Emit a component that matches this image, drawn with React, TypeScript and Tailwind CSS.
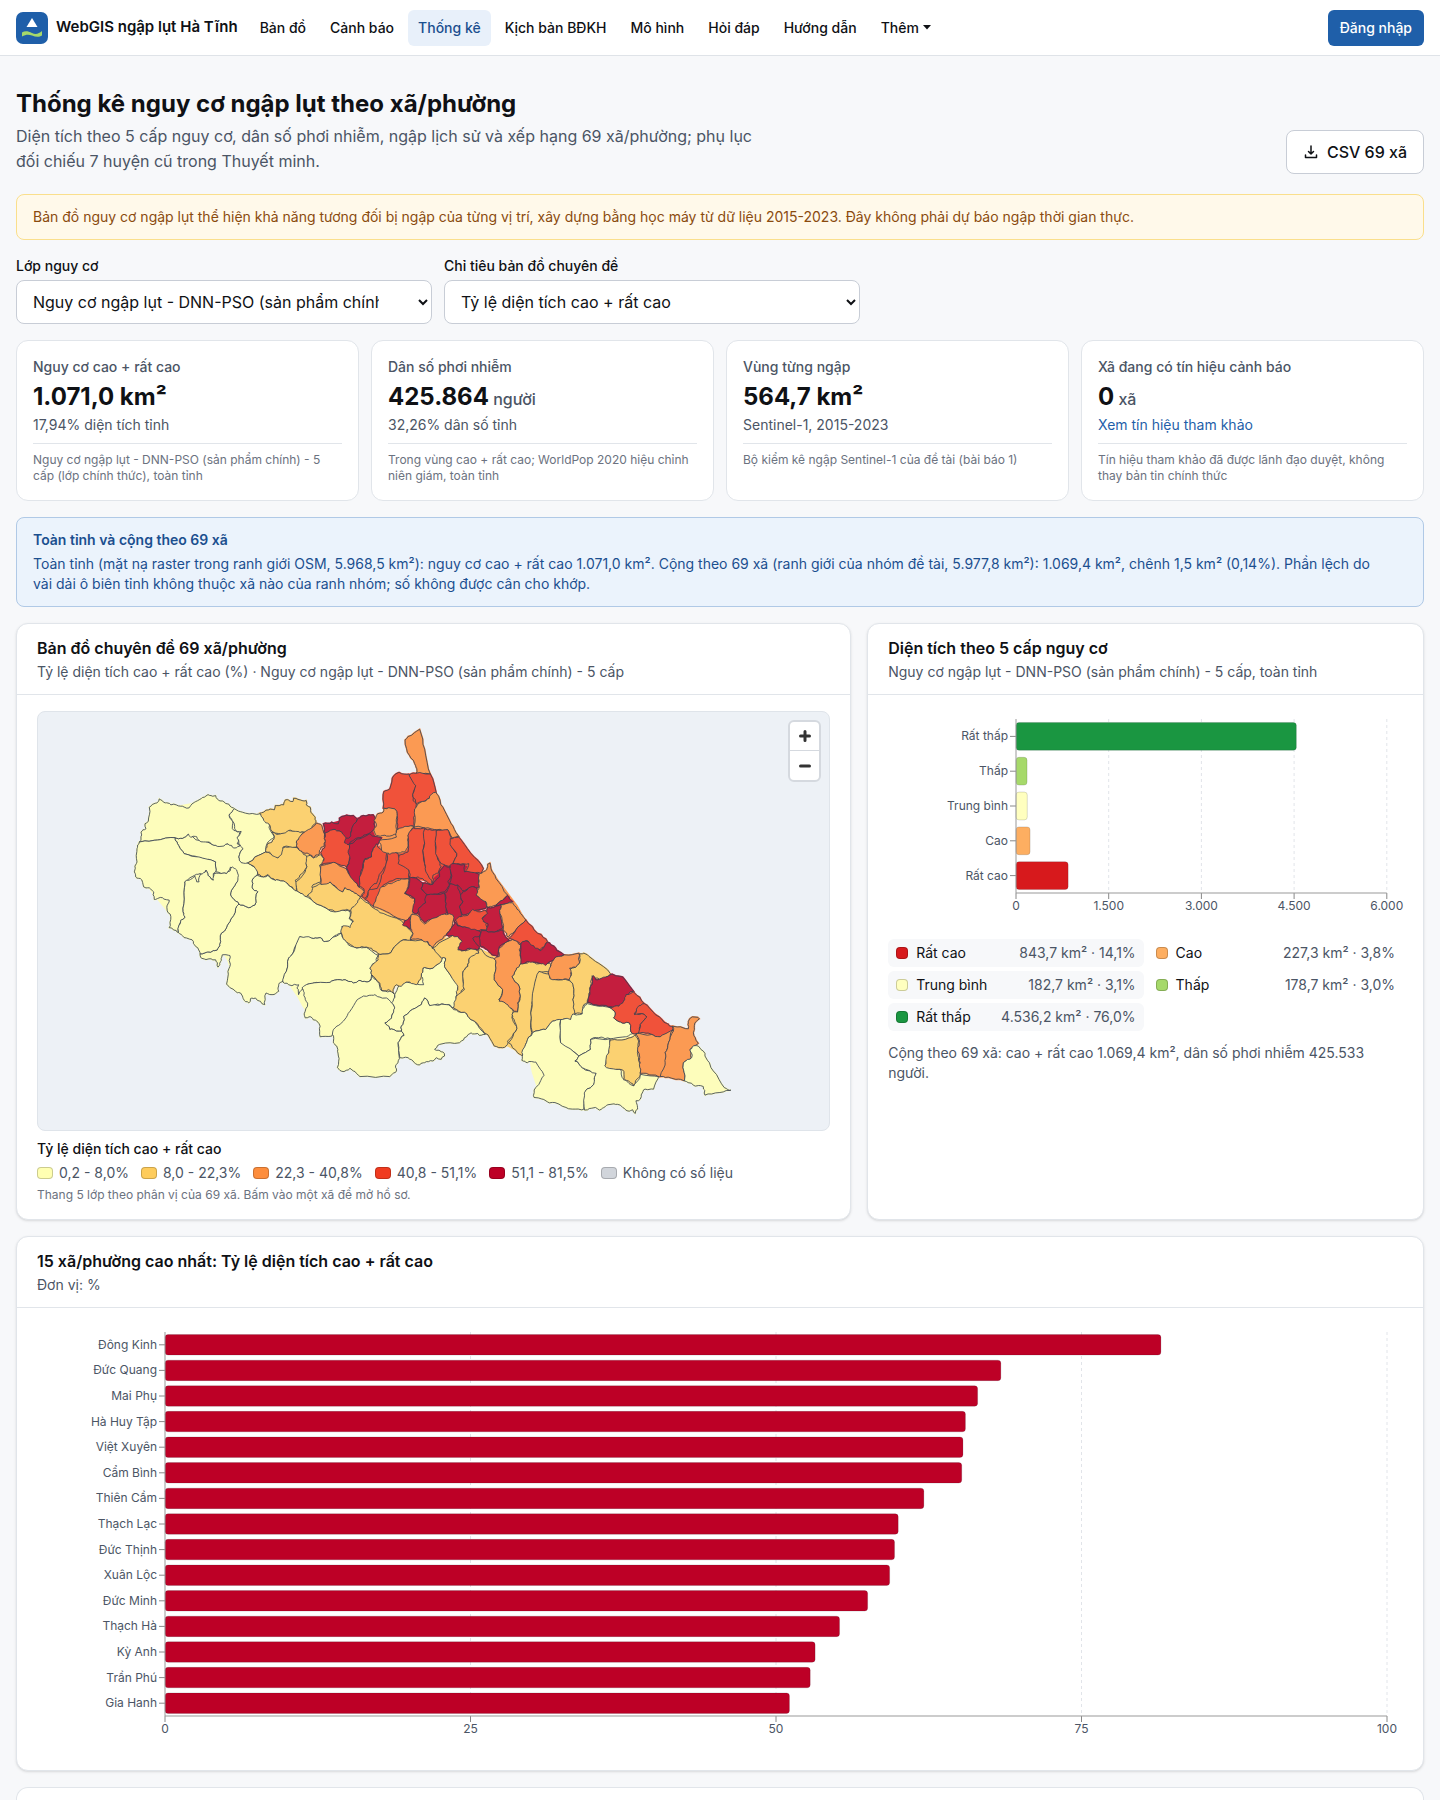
import { ReactNode } from "react";

const COLORS = {
    y: "#fdfdbb",
    g: "#fbd171",
    o: "#fb9a53",
    r: "#f0523a",
    c: "#c41e3e",
};

type Shape = [keyof typeof COLORS, string];

// Each sheet keeps its own origin, the polygons are drawn back to front.
// "base" holds coarse fills that lie under the wards of one colour.
const SHEETS: { x: number; y: number; base: Shape[]; shapes: Shape[] }[] = [
    {
        x: 249, y: 12,
        base: [
            ["y", "70,375 95,285 260,250 340,300 420,310 455,370 400,440 560,555 690,600 660,660 540,665 480,800 340,800 310,720 180,640 70,500"],
            ["g", "400,445 490,400 455,350 440,310 560,270 580,340 600,430 600,510 690,540 690,580 620,575 530,520 430,480"],
            ["c", "615,330 700,305 762,318 780,367 718,510 684,458 625,350"],
            ["r", "795,280 840,180 930,180 940,230 885,265 880,332 835,340"],
            ["o", "605,450 640,445 700,515 720,540 670,525"],
        ],
        shapes: [
            ["y", "355,567 385,578 403,570 412,530 395,518 395,495 410,480 430,485 443,480 465,495 490,497 505,510 530,527 555,543 575,555 610,575 640,590 668,585 690,590 688,610 700,622 690,640 665,635 663,655 650,660 632,673 612,680 600,668 575,670 540,665 532,685 515,720 505,730 498,770 488,800 475,810 475,830 455,840 437,835 433,870 420,860 405,850 390,852 385,865 372,858 360,835 345,830 325,815 318,808 322,770 328,755 328,722 305,720 300,740 292,757 285,735 265,732 240,728 238,717 270,712 290,705 300,680 302,655 328,620 345,585"],
            ["y", "163,367 190,366 203,356 235,375 285,390 358,385 368,400 355,425 362,440 380,443 408,460 410,480 395,495 395,518 412,530 403,570 385,578 355,567 333,545 333,525 350,500 348,480 330,455 318,475 285,470 285,440 265,432 235,428 190,415 170,385"],
            ["y", "55,380 60,350 75,340 72,325 82,318 85,275 108,262 115,250 128,260 150,268 180,272 205,277 225,258 245,246 262,237 285,240 298,256 325,266 342,280 335,292 326,297 336,318 340,345 352,350 362,345 355,365 350,385 358,392 340,398 322,385 310,392 285,390 265,380 235,375 228,364 210,366 203,356 190,366 163,367 110,374"],
            ["y", "342,280 375,293 418,295 430,312 446,325 450,345 462,365 448,375 438,390 436,410 410,422 383,442 362,442 355,425 368,400 355,385 350,365 362,348 345,345 335,315 326,300"],
            ["y", "55,380 110,374 163,367 170,385 190,415 235,425 285,440 285,470 278,475 278,495 262,480 256,465 245,478 238,475 222,480 192,500 190,540 187,590 193,608 180,620 173,653 158,645 145,638 150,605 138,577 145,555 125,548 100,553 98,530 85,518 68,515 58,490 44,485 40,470 48,440 48,400"],
            ["y", "192,500 205,495 222,482 228,500 235,500 238,478 256,465 262,480 278,495 280,475 300,475 318,475 335,455 350,470 350,500 333,525 333,545 355,567 345,585 328,620 302,655 300,680 290,705 270,712 238,717 225,695 218,680 190,668 173,653 180,615 193,607 187,590 190,540"],
            ["g", "562,540 575,528 570,520 600,505 625,500 645,515 668,530 675,517 700,530 722,545 712,565 695,592 680,583 670,585 645,590 610,575 575,555"],
            ["g", "530,527 522,505 555,470 560,455 555,425 570,420 580,428 600,418 612,430 610,445 598,450 602,500 575,515 575,530 560,545"],
            ["g", "383,442 410,422 436,410 450,415 473,428 485,400 495,395 530,397 545,410 560,425 560,455 545,475 525,495 528,528 505,508 490,497 465,495 443,478 430,485 412,478 405,460"],
            ["g", "455,350 480,355 500,345 555,350 540,365 528,380 530,395 488,395 485,410 473,428 452,415 437,410 440,390 455,380 462,365"],
            ["g", "418,293 445,283 462,283 465,270 490,268 495,253 518,258 520,248 545,255 558,255 558,268 570,275 572,290 585,305 587,323 575,340 552,350 530,348 505,345 480,355 455,348 445,325 430,315"],
            ["o", "528,380 540,362 565,342 580,333 590,323 605,330 615,370 612,392 598,405 598,415 580,427 565,415 545,408 530,395"],
            ["o", "602,450 640,440 678,460 690,480 715,515 733,530 722,545 700,530 675,517 668,530 645,512 630,500 602,508"],
            ["c", "610,325 635,320 655,325 658,308 685,300 700,300 712,312 705,330 695,345 690,370 675,385 665,350 645,342 620,352 615,375 612,350"],
            ["r", "615,352 645,342 665,350 680,370 683,385 690,400 688,430 680,455 645,442 625,443 605,448 612,430 602,412 615,392 612,370"],
            ["c", "712,312 730,300 760,298 768,312 762,325 770,340 745,355 720,367 700,375 685,388 673,382 678,368 690,365 695,345"],
            ["c", "690,385 720,370 750,355 785,367 775,385 760,400 755,425 735,430 728,460 720,485 718,515 700,495 680,458 690,430 685,405"],
            ["r", "770,385 780,400 802,412 800,440 785,470 770,505 750,520 735,550 725,545 733,528 718,512 722,480 735,432 755,425 760,400"],
            ["r", "815,410 835,415 840,430 870,455 868,490 830,490 790,510 775,545 762,575 735,553 750,522 772,520 785,480 800,440 805,415"],
            ["r", "790,278 792,228 810,220 822,180 838,170 868,175 888,210 880,235 880,255 890,265 885,300 885,333 855,338 832,342 832,300 825,280"],
            ["o", "770,300 790,290 792,278 825,280 832,300 830,342 830,357 800,362 770,360 762,345 770,330 762,315"],
            ["o", "900,40 915,100 932,175 890,173 888,150 870,120 856,72 865,62"],
            ["r", "868,178 888,173 932,175 950,232 935,240 910,258 890,265 880,245 888,210"],
        ],
    },
    {
        x: 249, y: 507,
        base: [
            ["y", "500,300 540,175 660,170 775,230 755,300 820,345 830,450 640,460 560,400"],
            ["g", "690,130 720,60 870,125 870,180 780,220 670,170"],
        ],
        shapes: [
            ["y", "538,170 575,175 600,173 612,185 632,178 663,160 670,175 685,195 710,205 740,203 775,227 770,245 750,265 755,285 748,305 720,302 700,310 685,305 660,300 630,308 590,308 568,312 545,330 535,345 530,325 535,315 515,318 488,307 498,275 505,235 515,225"],
            ["y", "545,325 568,312 630,308 660,300 685,305 700,310 720,302 748,305 757,285 772,305 782,330 810,335 825,345 822,375 830,400 815,430 780,440 690,450 637,465 635,470 600,472 600,440 590,425 572,412 555,415 555,395 562,380 555,355 550,335"],
            ["g", "722,53 755,80 790,100 845,122 880,160 872,182 850,180 830,195 805,222 775,222 755,205 725,200 710,203 685,190 670,178 663,150 668,138 690,143 700,125 688,115 692,90 710,70"],
        ],
    },
    {
        x: 1209, y: 507,
        base: [
            ["y", "-300,480 -200,360 -130,340 0,240 45,380 100,450 -20,495 -120,530 -150,580 -240,580 -290,560"],
            ["g", "-110,185 50,170 120,205 240,270 330,260 425,225 500,290 440,370 400,415 280,455 250,520 190,495 75,395 0,245 -170,310 -180,235"],
            ["o", "170,240 235,190 245,240 220,290 240,380 180,365"],
            ["y", "260,500 320,445 445,375 530,385 590,470 650,595 590,655 440,685 300,655"],
            ["r", "520,385 585,345 690,435 690,460 600,460 530,415"],
            ["o", "600,465 760,450 775,490 735,600 610,580"],
        ],
        shapes: [
            ["y", "-135,345 -120,315 -98,307 -80,310 -48,315 -55,290 -50,265 -20,265 0,250 5,235 18,235 15,260 35,290 55,315 55,335 50,350 50,370 42,385 20,375 0,375 -30,378 -45,355 -55,375 -90,395 -108,410 -115,440 -115,455 -130,455 -150,450 -165,430 -145,415 -137,385 -145,370"],
            ["y", "-323,465 -315,445 -290,425 -270,395 -248,360 -220,350 -195,345 -160,355 -145,370 -135,385 -145,415 -165,430 -150,450 -130,455 -115,455 -107,468 -125,490 -122,530 -130,555 -130,575 -150,592 -240,592 -260,575 -270,567 -288,577 -308,565 -305,530 -310,500 -320,490"],
            ["y", "-115,440 -108,410 -90,395 -55,375 -45,355 -30,378 20,375 42,390 75,398 85,410 105,425 138,465 120,468 115,462 95,460 75,475 60,490 0,495 -15,510 10,518 15,530 5,540 -10,535 -20,545 -40,547 -60,557 -80,545 -95,535 -120,535 -125,490 -107,468 -115,455"],
            ["g", "-110,180 -40,183 -20,205 8,235 0,250 -20,265 -50,265 -55,290 -70,315 -100,307 -115,320 -130,315 -140,330 -138,342 -155,330 -175,332 -180,310 -205,285 -210,265 -185,240 -185,222 -155,222 -130,195"],
            ["g", "-22,205 20,178 50,163 70,185 55,210 75,212 100,205 118,215 115,225 90,235 85,260 70,280 75,325 60,345 50,350 55,320 35,290 15,260 18,235 5,235 0,228"],
            ["g", "118,205 150,232 165,238 170,265 165,300 190,330 178,360 205,375 222,395 220,420 232,440 230,455 205,485 200,500 190,505 165,500 135,460 105,425 85,410 75,398 42,385 50,350 75,330 70,280 85,260 90,235 118,220"],
            ["g", "235,397 243,350 240,320 218,290 232,265 245,252 270,245 300,252 332,250 332,278 300,275 290,320 278,370 275,400 278,460 262,490 250,530 235,520 208,490 230,455 232,440 220,415 222,398"],
            ["o", "210,183 232,180 245,195 240,210 247,240 232,265 218,290 240,320 243,350 235,370 235,397 225,395 205,375 180,365 190,330 165,300 170,265 165,238 180,230 178,205"],
            ["g", "300,275 330,282 332,295 370,300 392,303 403,320 402,360 408,405 395,420 370,420 340,425 320,450 280,460 275,400 285,320"],
            ["g", "422,222 435,220 470,245 515,282 495,298 470,295 460,288 455,320 450,350 445,370 435,375 430,403 408,403 402,360 403,320 390,298 398,280 390,268 410,262 422,250"],
            ["o", "345,235 375,225 420,220 422,250 410,262 392,265 395,280 390,300 370,300 333,297 330,270 340,245"],
            ["y", "445,372 510,383 530,400 525,415 545,427 572,430 582,462 560,472 515,478 487,473 455,480 455,510 420,530 365,495 365,420 395,420 402,403 430,403 437,378"],
            ["y", "280,460 320,450 340,425 365,420 365,490 420,530 408,545 430,565 472,580 465,615 440,635 435,690 400,690 360,675 325,668 285,655 290,625 315,588 290,548 265,550 248,543 248,520 262,490"],
            ["y", "455,510 455,480 515,478 515,500 500,560 545,570 555,600 585,620 605,585 660,592 645,630 615,632 605,660 592,665 597,690 590,703 582,692 565,695 545,678 520,675 500,682 482,693 470,685 437,693 437,650 440,635 465,615 472,582 430,565 408,545 420,530"],
            ["c", "463,287 470,300 500,292 520,283 552,292 585,335 570,342 555,365 540,380 510,382 470,375 447,368 455,320"],
            ["r", "585,337 617,372 600,385 587,402 610,402 625,412 605,435 600,460 582,462 572,430 545,427 525,415 530,400 510,383 540,380 558,360 562,345"],
            ["r", "617,372 650,405 685,432 702,440 700,455 665,472 640,465 600,462 605,435 625,412 610,402 587,405 597,383"],
            ["g", "515,482 560,480 590,465 600,485 598,530 605,560 605,585 595,600 585,620 570,605 555,602 552,572 530,570 498,560 510,520"],
            ["o", "592,462 640,465 665,472 703,452 690,490 680,520 682,550 672,590 640,587 605,582 605,550 597,515 602,490"],
            ["o", "703,440 750,448 750,430 762,412 783,418 768,438 765,460 780,492 755,510 758,535 735,550 738,605 700,597 665,592 680,550 680,520 690,490 705,455"],
            ["y", "762,502 780,500 800,522 800,530 825,575 858,625 878,633 845,640 800,648 795,622 765,618 738,605 735,550 760,535 755,510"],
        ],
    },
    {
        x: 879, y: 27,
        base: [
            ["r", "205,398 235,325 320,328 388,352 455,455 370,440 308,490 240,475 130,555 97,535 100,440 148,375"],
            ["o", "140,350 200,325 320,220 380,350 240,330 225,395 155,395"],
            ["o", "240,478 260,600 370,590 350,650 308,680 245,655 220,598 130,560 150,505"],
            ["c", "238,472 300,490 345,437 405,435 450,462 445,528 468,565 400,585 375,605 285,608 250,575 255,535"],
            ["c", "352,645 378,605 415,625 455,632 470,572 500,558 515,555 520,630 538,660 505,705 450,680 400,690"],
            ["o", "455,465 480,435 590,600 537,650 515,590 515,556 475,560"],
            ["r", "385,605 430,572 470,575 472,630 415,622"],
            ["c", "580,680 640,690 660,670 700,705 650,732 580,728"],
        ],
        shapes: [
            ["o", "318,215 340,260 365,310 388,348 368,352 355,328 320,328 295,322 253,320 255,265 265,250 290,240 305,222"],
            ["o", "148,360 200,350 200,330 235,318 255,320 235,345 235,375 225,395 205,398 180,402 155,390"],
            ["r", "235,345 250,322 285,322 288,345 282,380 285,430 292,455 310,475 308,493 290,483 265,470 240,475 238,450 205,430 208,405 235,395"],
            ["r", "285,325 320,328 320,395 330,425 335,440 328,458 310,465 310,490 292,460 285,430 283,380"],
            ["r", "320,330 355,328 365,355 365,375 382,400 370,430 358,438 335,430 318,400"],
            ["r", "362,355 388,350 425,400 462,445 455,460 430,458 405,458 418,430 385,430 370,430 382,400 365,378"],
            ["o", "238,478 235,500 225,520 240,530 255,535 252,570 250,580 240,590 235,603 215,598 170,575 130,560 140,530 150,505 175,490 210,480"],
            ["c", "238,470 265,478 280,490 275,505 290,520 288,545 270,570 262,582 248,575 255,535 238,525 225,520 238,495"],
            ["c", "280,490 310,492 330,470 328,455 345,435 362,440 365,465 355,485 360,495 345,515 320,522 290,522 275,505"],
            ["c", "362,435 375,430 405,433 405,455 450,462 450,500 430,500 400,512 385,495 360,490 365,460"],
            ["c", "290,525 345,518 350,550 352,578 340,588 310,595 285,608 270,590 265,570 288,548"],
            ["c", "400,515 425,500 438,502 445,528 470,548 468,565 430,575 400,585 390,560 400,545 390,530"],
            ["c", "360,492 385,495 385,505 400,545 390,560 395,590 375,605 355,585 350,550 345,520"],
            ["o", "482,428 485,445 500,475 535,525 515,545 500,555 475,562 470,545 440,525 450,500 450,460 468,452 475,432"],
            ["c", "535,527 550,545 515,555 500,556 520,540"],
            ["c", "475,562 500,558 515,553 512,580 520,625 500,635 470,632 475,610 458,600 470,580"],
            ["o", "515,553 550,548 570,572 590,600 560,630 537,652 522,630 512,580"],
            ["c", "243,590 243,628 218,615 225,603"],
            ["o", "245,583 262,585 285,612 310,595 345,582 370,585 372,600 365,625 350,645 325,665 308,685 295,665 270,658 242,660 250,640 243,625"],
            ["r", "378,600 395,590 420,580 430,568 445,575 470,572 475,580 458,595 470,610 472,630 440,632 410,622 385,615"],
            ["c", "375,605 385,618 410,622 445,632 455,640 450,650 430,655 450,680 445,690 420,685 400,692 385,685 398,665 385,650 350,645 368,620"],
            ["c", "455,632 470,632 500,635 520,630 528,650 540,662 510,680 505,710 485,700 475,690 455,680 450,655"],
            ["c", "655,667 680,685 705,705 675,718 650,737 630,730 595,725 575,732 575,672 590,662 633,693"],
            ["r", "590,600 625,640 655,665 633,690 605,675 590,662 575,672 540,655 560,630"],
        ],
    },
];

// Splits every edge and nudges its middle. The nudge depends only on the edge's
// own ends, so two neighbours that share an edge stay joined.
function roughen(text: string, ox: number, oy: number) {
    let pts = text.split(" ").map((p) => p.split(",").map(Number)).map(([x, y]) => [x + ox, y + oy]);
    for (let pass = 0; pass < 2; pass++) {
        const next: number[][] = [];
        pts.forEach((a, i) => {
            const b = pts[(i + 1) % pts.length];
            const len = Math.hypot(b[0] - a[0], b[1] - a[1]);
            next.push(a);
            if (len < 9) return;
            const mx = (a[0] + b[0]) / 2;
            const my = (a[1] + b[1]) / 2;
            const amp = Math.min(len * 0.15, 2.5);
            next.push([mx + Math.sin(mx * 12.9 + my * 7.2) * amp, my + Math.sin(mx * 5.3 + my * 17.7) * amp]);
        });
        pts = next;
    }
    return pts.map(([x, y]) => `${x.toFixed(1)},${y.toFixed(1)}`).join(" ");
}

const toRegions = (key: "base" | "shapes") =>
    SHEETS.flatMap((s) => s[key].map(([color, pts]) => ({ fill: COLORS[color], points: roughen(pts, s.x, s.y) })));

const BASES = toRegions("base");
const REGIONS = toRegions("shapes");

const NAV = ["Bản đồ", "Cảnh báo", "Thống kê", "Kịch bản BĐKH", "Mô hình", "Hỏi đáp", "Hướng dẫn"];

const STATS = [
    { label: "Nguy cơ cao + rất cao", value: "1.071,0 km²", unit: "", sub: "17,94% diện tích tỉnh", note: "Nguy cơ ngập lụt - DNN-PSO (sản phẩm chính) - 5 cấp (lớp chính thức), toàn tỉnh" },
    { label: "Dân số phơi nhiễm", value: "425.864", unit: "người", sub: "32,26% dân số tỉnh", note: "Trong vùng cao + rất cao; WorldPop 2020 hiệu chỉnh niên giám, toàn tỉnh" },
    { label: "Vùng từng ngập", value: "564,7 km²", unit: "", sub: "Sentinel-1, 2015-2023", note: "Bộ kiểm kê ngập Sentinel-1 của đề tài (bài báo 1)" },
    { label: "Xã đang có tín hiệu cảnh báo", value: "0", unit: "xã", sub: "Xem tín hiệu tham khảo", link: true, note: "Tín hiệu tham khảo đã được lãnh đạo duyệt, không thay bản tin chính thức" },
];

const MAP_LEGEND = [
    { color: "#ffffb2", label: "0,2 - 8,0%" },
    { color: "#fecc5c", label: "8,0 - 22,3%" },
    { color: "#fd8d3c", label: "22,3 - 40,8%" },
    { color: "#f03b20", label: "40,8 - 51,1%" },
    { color: "#bd0026", label: "51,1 - 81,5%" },
    { color: "#d1d5db", label: "Không có số liệu" },
];

const LEVELS = [
    { name: "Rất cao", value: 843.7, text: "843,7 km² · 14,1%", color: "#d7191c" },
    { name: "Cao", value: 227.3, text: "227,3 km² · 3,8%", color: "#fdae61" },
    { name: "Trung bình", value: 182.7, text: "182,7 km² · 3,1%", color: "#ffffbf" },
    { name: "Thấp", value: 178.7, text: "178,7 km² · 3,0%", color: "#a6d96a" },
    { name: "Rất thấp", value: 4536.2, text: "4.536,2 km² · 76,0%", color: "#1a9641" },
];

const TOP = [
    { name: "Đông Kinh", value: 81.5 },
    { name: "Đức Quang", value: 68.4 },
    { name: "Mai Phụ", value: 66.5 },
    { name: "Hà Huy Tập", value: 65.5 },
    { name: "Việt Xuyên", value: 65.3 },
    { name: "Cẩm Bình", value: 65.2 },
    { name: "Thiên Cầm", value: 62.1 },
    { name: "Thạch Lạc", value: 60.0 },
    { name: "Đức Thịnh", value: 59.7 },
    { name: "Xuân Lộc", value: 59.3 },
    { name: "Đức Minh", value: 57.5 },
    { name: "Thạch Hà", value: 55.2 },
    { name: "Kỳ Anh", value: 53.2 },
    { name: "Trần Phú", value: 52.8 },
    { name: "Gia Hanh", value: 51.1 },
].map((d) => ({ ...d, color: "#bd0026" }));

type BarChartProps = {
    data: { name: string; value: number; color: string }[];
    max: number;
    ticks: string[];
    height: number;
    label: string;
};

function BarChart({ data, max, ticks, height, label }: BarChartProps) {
    const band = height / data.length;
    const bar = band * 0.8;

    return (
        <div className="pt-2 pr-4 pb-[38px] pl-32">
            <svg role="img" aria-label={label} width="100%" height={height} className="block overflow-visible text-xs">
                {ticks.map((t, i) => {
                    const x = `${(i / (ticks.length - 1)) * 100}%`;
                    return (
                        <g key={t}>
                            {i > 0 && <line x1={x} x2={x} y1={0} y2={height} stroke="#e1e4e9" strokeDasharray="3 3" />}
                            <line x1={x} x2={x} y1={height} y2={height + 6} stroke="#888" />
                            <text x={x} y={height + 17} textAnchor="middle" fill="#4b5565">{t}</text>
                        </g>
                    );
                })}
                {data.map((d, i) => (
                    <g key={d.name}>
                        <rect
                            x={0}
                            y={i * band + (band - bar) / 2}
                            width={`${(d.value / max) * 100}%`}
                            height={bar}
                            rx={3}
                            fill={d.color}
                            stroke="#111827"
                            strokeOpacity={0.15}
                        />
                        <line x1={-6} x2={0} y1={(i + 0.5) * band} y2={(i + 0.5) * band} stroke="#888" />
                        <text x={-8} y={(i + 0.5) * band + 4} textAnchor="end" fill="#4b5565">{d.name}</text>
                    </g>
                ))}
                <line x1={0} x2={0} y1={0} y2={height} stroke="#999" />
                <line x1={0} x2="100%" y1={height} y2={height} stroke="#999" />
            </svg>
        </div>
    );
}

function Panel({ title, subtitle, children }: { title: string; subtitle: string; children: ReactNode }) {
    return (
        <section className="rounded-xl border border-[#e1e5ea] bg-white shadow-sm">
            <div className="border-b border-[#e1e5ea] px-5 py-3">
                <h2 className="text-base leading-6 font-semibold">{title}</h2>
                <p className="mt-0.5 text-sm text-[#4b5565]">{subtitle}</p>
            </div>
            <div className="px-5 py-4">{children}</div>
        </section>
    );
}

function Swatch({ color }: { color: string }) {
    return <span className="h-3 w-4 shrink-0 rounded-[4px] border border-black/20" style={{ backgroundColor: color }} />;
}

function RiskMap() {
    return (
        <div className="relative h-[420px] overflow-hidden rounded-lg border border-[#dfe4ea] bg-[#edf1f6]">
            <svg role="img" aria-label="Bản đồ 69 xã/phường" viewBox="0 0 2382 1260" className="h-full w-full">
                {BASES.map((r, i) => <polygon key={`b${i}`} points={r.points} fill={r.fill} />)}
                {REGIONS.map((r, i) => <polygon key={`u${i}`} points={r.points} fill={r.fill} stroke={r.fill} strokeWidth="5" />)}
                {REGIONS.map((r, i) => <polygon key={i} points={r.points} fill={r.fill} stroke="#374151" strokeWidth="2.5" strokeLinejoin="round" />)}
            </svg>
            <div className="absolute top-2 right-2 flex w-[33px] flex-col overflow-hidden rounded-md border-2 border-[#d5d9df] bg-white">
                <button type="button" aria-label="Phóng to" className="flex h-[29px] items-center justify-center border-b border-[#d5d9df]">
                    <svg width="12" height="12" viewBox="0 0 12 12" stroke="#333" strokeWidth="3" strokeLinecap="round"><path d="M6 1.5v9M1.5 6h9" /></svg>
                </button>
                <button type="button" aria-label="Thu nhỏ" className="flex h-[29px] items-center justify-center">
                    <svg width="12" height="12" viewBox="0 0 12 12" stroke="#333" strokeWidth="3" strokeLinecap="round"><path d="M1.5 6h9" /></svg>
                </button>
            </div>
        </div>
    );
}

export default function App() {
    return (
        <div className="min-h-screen bg-[#f7f8fa] font-[Inter,'Noto_Sans',sans-serif] text-[#0f1115] antialiased">
            <header className="flex h-14 items-center border-b border-[#dfe3e8] bg-white px-4">
                <a href="#" className="flex items-center gap-2 text-[15px] font-semibold">
                    <svg width="32" height="32" viewBox="0 0 32 32" aria-hidden="true">
                        <rect width="32" height="32" rx="7" fill="#1f5fa9" />
                        <path d="M16 6 21.500 15H10.500Z" fill="#fff" />
                        <path d="M6 20.500c3-2 6-1.500 10 .5s7 .5 10-2v4.500c-3 2-6.500 1.500-10 0s-6.500-1-10 1Z" fill="#a6d96a" />
                    </svg>
                    WebGIS ngập lụt Hà Tĩnh
                </a>
                <nav className="ml-3 flex items-center gap-1 text-sm font-medium">
                    {NAV.map((item) => (
                        <a
                            key={item}
                            href="#"
                            className={`flex h-9 items-center rounded-md px-2.5 ${item === "Thống kê" ? "bg-[#e8f0fa] text-[#1b4f8f]" : ""}`}
                        >
                            {item}
                        </a>
                    ))}
                    <button type="button" className="flex h-9 items-center gap-1 px-2.5">
                        Thêm
                        <svg width="8" height="5" viewBox="0 0 8 5" aria-hidden="true"><path d="M0 0h8L4 4.500Z" fill="currentColor" /></svg>
                    </button>
                </nav>
                <a href="#" className="ml-auto flex h-9 items-center rounded-md bg-[#1f5fa9] px-3 text-sm font-medium text-white">Đăng nhập</a>
            </header>

            <main className="flex flex-col gap-4 px-4 pt-8">
                <div className="flex items-end justify-between gap-6 pb-1">
                    <div className="max-w-[760px]">
                        <h1 className="text-2xl leading-8 font-bold">Thống kê nguy cơ ngập lụt theo xã/phường</h1>
                        <p className="mt-1 leading-[25px] text-[#4b5565]">
                            Diện tích theo 5 cấp nguy cơ, dân số phơi nhiễm, ngập lịch sử và xếp hạng 69 xã/phường; phụ lục đối chiếu 7 huyện cũ trong Thuyết minh.
                        </p>
                    </div>
                    <button type="button" className="flex h-11 items-center gap-2 rounded-lg border border-[#c8cdd6] bg-white px-4 font-medium">
                        <svg width="16" height="16" viewBox="0 0 16 16" fill="none" stroke="currentColor" strokeWidth="1.5" strokeLinecap="round" strokeLinejoin="round" aria-hidden="true">
                            <path d="M8 2v8M5.500 7.500l2.500 2.500 2.500-2.500M2.500 11v2.500h11V11" />
                        </svg>
                        CSV 69 xã
                    </button>
                </div>

                <p className="rounded-lg border border-[#fadf8c] bg-[#fff9ea] px-4 py-3 text-sm text-[#8a4b0f]">
                    Bản đồ nguy cơ ngập lụt thể hiện khả năng tương đối bị ngập của từng vị trí, xây dựng bằng học máy từ dữ liệu 2015-2023. Đây không phải dự báo ngập thời gian thực.
                </p>

                <div className="flex gap-3">
                    <div className="flex w-[416px] flex-col gap-1">
                        <label htmlFor="layer" className="text-sm font-medium">Lớp nguy cơ</label>
                        <select id="layer" className="h-11 w-full rounded-lg border border-[#c8cdd6] bg-white pr-9 pl-3">
                            <option>Nguy cơ ngập lụt - DNN-PSO (sản phẩm chính) - 5 cấp</option>
                        </select>
                    </div>
                    <div className="flex w-[416px] flex-col gap-1">
                        <label htmlFor="metric" className="text-sm font-medium">Chỉ tiêu bản đồ chuyên đề</label>
                        <select id="metric" className="h-11 w-full rounded-lg border border-[#c8cdd6] bg-white pr-9 pl-3">
                            <option>Tỷ lệ diện tích cao + rất cao</option>
                        </select>
                    </div>
                </div>

                <div className="grid grid-cols-4 gap-3">
                    {STATS.map((s) => (
                        <div key={s.label} className="rounded-xl border border-[#e1e5ea] bg-white p-4">
                            <p className="text-sm font-medium text-[#4b5565]">{s.label}</p>
                            <p className="mt-1 text-2xl leading-8 font-bold">
                                {s.value}
                                {s.unit && <span className="text-base font-medium text-[#4b5565]"> {s.unit}</span>}
                            </p>
                            {s.link
                                ? <a href="#" className="mt-0.5 block text-sm text-[#1f5fa9]">{s.sub}</a>
                                : <p className="mt-0.5 text-sm text-[#4b5565]">{s.sub}</p>}
                            <p className="mt-2 border-t border-[#e1e5ea] pt-2 text-xs text-[#6b7280]">{s.note}</p>
                        </div>
                    ))}
                </div>

                <div className="rounded-lg border border-[#b0c9e6] bg-[#ebf3fc] px-4 py-3 text-sm text-[#1b4f8f]">
                    <p className="font-semibold">Toàn tỉnh và cộng theo 69 xã</p>
                    <p className="mt-1 pr-8">
                        Toàn tỉnh (mặt nạ raster trong ranh giới OSM, 5.968,5 km²): nguy cơ cao + rất cao 1.071,0 km². Cộng theo 69 xã (ranh giới của nhóm đề tài, 5.977,8 km²): 1.069,4 km², chênh 1,5 km² (0,14%). Phần lệch do vài dải ô biên tỉnh không thuộc xã nào của ranh nhóm; số không được cân cho khớp.
                    </p>
                </div>

                <div className="grid grid-cols-[3fr_2fr] gap-4">
                    <Panel title="Bản đồ chuyên đề 69 xã/phường" subtitle="Tỷ lệ diện tích cao + rất cao (%) · Nguy cơ ngập lụt - DNN-PSO (sản phẩm chính) - 5 cấp">
                        <RiskMap />
                        <p className="mt-2 text-sm font-medium">Tỷ lệ diện tích cao + rất cao</p>
                        <ul className="mt-1 flex flex-wrap gap-x-3 text-sm text-[#4b5565]">
                            {MAP_LEGEND.map((l) => (
                                <li key={l.label} className="flex items-center gap-1.5"><Swatch color={l.color} />{l.label}</li>
                            ))}
                        </ul>
                        <p className="mt-1 text-xs text-[#6b7280]">Thang 5 lớp theo phân vị của 69 xã. Bấm vào một xã để mở hồ sơ.</p>
                    </Panel>

                    <Panel title="Diện tích theo 5 cấp nguy cơ" subtitle="Nguy cơ ngập lụt - DNN-PSO (sản phẩm chính) - 5 cấp, toàn tỉnh">
                        <BarChart
                            label="Diện tích theo 5 cấp nguy cơ"
                            data={[...LEVELS].reverse()}
                            max={6000}
                            height={174}
                            ticks={["0", "1.500", "3.000", "4.500", "6.000"]}
                        />
                        <ul className="mt-2 grid grid-cols-2 gap-1 text-sm">
                            {LEVELS.map((l) => (
                                <li key={l.name} className="flex items-center gap-2 rounded-md px-2 py-1 odd:bg-[#f7f8fa]">
                                    <span className="size-3 shrink-0 rounded-[4px] border border-black/20" style={{ backgroundColor: l.color }} />
                                    {l.name}
                                    <span className="ml-auto text-[#4b5565]">{l.text}</span>
                                </li>
                            ))}
                        </ul>
                        <p className="mt-3 text-sm text-[#4b5565]">Cộng theo 69 xã: cao + rất cao 1.069,4 km², dân số phơi nhiễm 425.533 người.</p>
                    </Panel>
                </div>

                <Panel title="15 xã/phường cao nhất: Tỷ lệ diện tích cao + rất cao" subtitle="Đơn vị: %">
                    <BarChart label="15 xã/phường cao nhất" data={TOP} max={100} height={384} ticks={["0", "25", "50", "75", "100"]} />
                </Panel>

                <section className="h-[13px] rounded-t-xl border border-b-0 border-[#e1e5ea] bg-white" />
            </main>
        </div>
    );
}
